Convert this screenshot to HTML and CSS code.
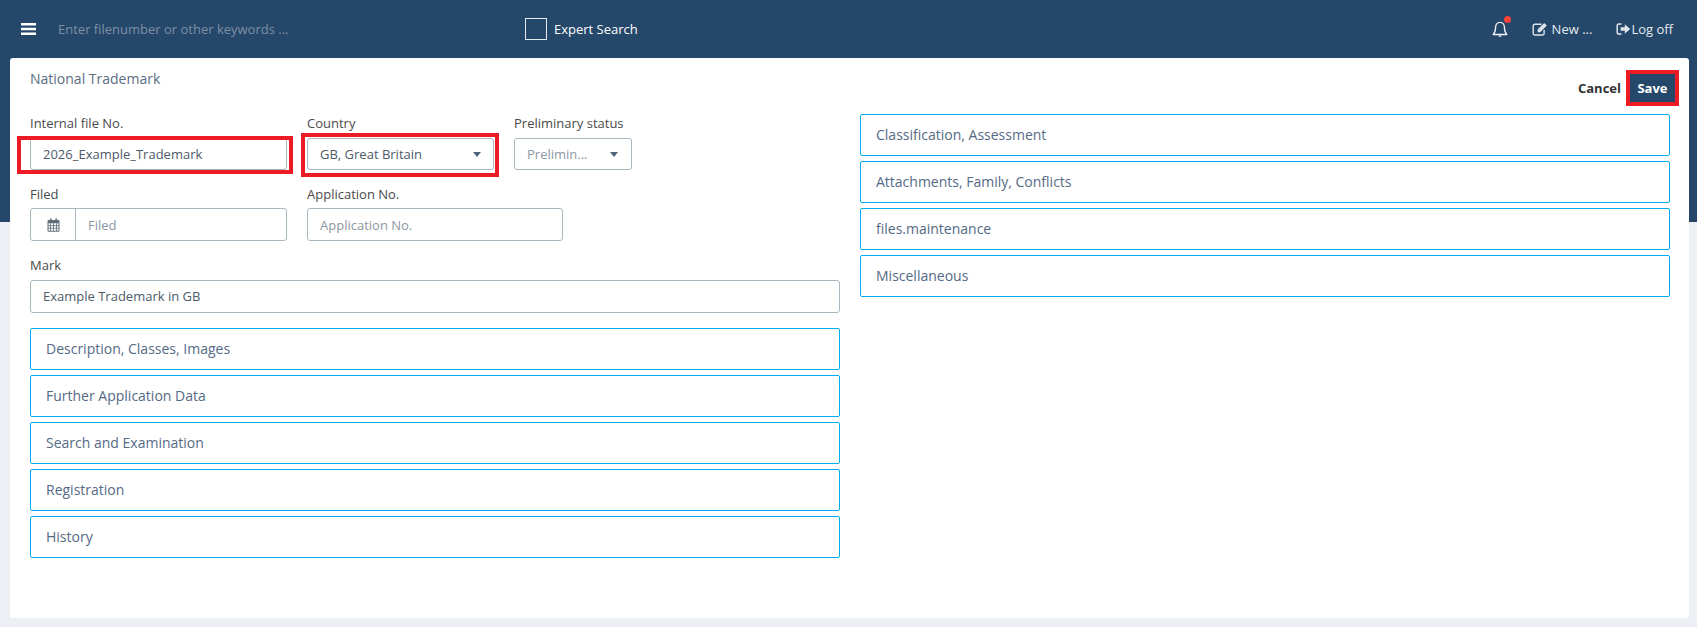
FILE: index.html
```html
<!DOCTYPE html>
<html lang="en">
<head>
<meta charset="utf-8">
<title>National Trademark</title>
<link rel="stylesheet" href="styles.css">
</head>
<body>
<div class="page">
  <header class="topbar">
    <svg class="burger" viewBox="0 0 15 12" width="15" height="12"><path d="M0 0h15v2.6H0zM0 4.7h15v2.6H0zM0 9.4h15V12H0z" fill="#fff"/></svg>
    <span class="search">Enter filenumber or other keywords ...</span>
    <span class="checkbox"></span>
    <span class="expert">Expert Search</span>
    <div class="nav">
      <span class="bell">
        <svg viewBox="0 0 16 17" width="16" height="17"><path d="M8 1.4c-2.9 0-4.4 2.2-4.4 4.9 0 3.6-.9 5.7-2.4 7.2h13.6c-1.5-1.5-2.4-3.6-2.4-7.2 0-2.7-1.5-4.9-4.4-4.9z" fill="none" stroke="#f0f3f6" stroke-width="1.3" stroke-linejoin="round"/><path d="M6.2 14.6a1.9 1.9 0 0 0 3.6 0z" fill="#f0f3f6"/></svg>
        <i class="dot"></i>
      </span>
      <span class="nav-item new">
        <svg viewBox="0 0 16 14" width="16" height="14"><path d="M9.5 2.2H3A1.7 1.7 0 0 0 1.2 4v7.2A1.7 1.7 0 0 0 3 13h7.4a1.7 1.7 0 0 0 1.7-1.8V8" fill="none" stroke="#dfe5ea" stroke-width="1.4"/><path d="M5.6 7.6l6.6-6.6 2.6 2.6-6.6 6.6H5.6z" fill="#dfe5ea"/></svg>
        New ...
      </span>
      <span class="nav-item">
        <svg viewBox="0 0 15 14" width="15" height="14"><path d="M5.5 2H3A1.8 1.8 0 0 0 1.2 3.8v6.4A1.8 1.8 0 0 0 3 12h2.5" fill="none" stroke="#dfe5ea" stroke-width="1.5"/><path d="M4.6 5.2h4.2V2.2L14.2 7 8.8 11.8V8.8H4.6z" fill="#dfe5ea"/></svg>Log off
      </span>
    </div>
  </header>

  <main class="card">
    <div class="card-head">
      <h1 class="title">National Trademark</h1>
      <div class="actions">
        <span class="cancel">Cancel</span>
        <span class="save">Save<i class="mark mark-save"></i></span>
      </div>
    </div>
    <div class="columns">
      <section class="col">
        <div class="row row-top">
          <div class="field w-file">
            <label>Internal file No.</label>
            <div class="control value">2026_Example_Trademark</div>
            <i class="mark mark-file"></i>
          </div>
          <div class="field w-country">
            <label>Country</label>
            <div class="control select value"><span>GB, Great Britain</span><i class="caret"></i></div>
            <i class="mark mark-country"></i>
          </div>
          <div class="field w-status">
            <label>Preliminary status</label>
            <div class="control select muted"><span>Prelimin...</span><i class="caret"></i></div>
          </div>
        </div>
        <div class="row row-mid">
          <div class="field w-file">
            <label>Filed</label>
            <div class="control group muted">
              <span class="addon">
                <svg viewBox="0 0 13 14" width="13" height="14"><path d="M1 2.6h11v10.6H1z" fill="none" stroke="#5f6c78" stroke-width="1"/><path d="M1 2.6h11v2.6H1zM3 .6h1.6v2.8H3zM8.4.6H10v2.8H8.4z" fill="#5f6c78"/><path d="M3.5 5.2v8M6.5 5.2v8M9.5 5.2v8M1 7.6h11M1 10.2h11" stroke="#5f6c78" stroke-width=".8"/></svg>
              </span>
              <span class="group-text">Filed</span>
            </div>
          </div>
          <div class="field w-app">
            <label>Application No.</label>
            <div class="control muted">Application No.</div>
          </div>
        </div>
        <div class="row row-mark">
          <div class="field w-full">
            <label>Mark</label>
            <div class="control value">Example Trademark in GB</div>
          </div>
        </div>
        <div class="panels">
          <div class="panel">Description, Classes, Images</div>
          <div class="panel">Further Application Data</div>
          <div class="panel">Search and Examination</div>
          <div class="panel">Registration</div>
          <div class="panel">History</div>
        </div>
      </section>
      <section class="col">
        <div class="panels">
          <div class="panel">Classification, Assessment</div>
          <div class="panel">Attachments, Family, Conflicts</div>
          <div class="panel">files.maintenance</div>
          <div class="panel">Miscellaneous</div>
        </div>
      </section>
    </div>
  </main>
</div>
</body>
</html>
```

FILE: styles.css
```css
* { box-sizing: border-box; }
html, body { margin: 0; height: 100%; }
body {
  font-family: "Open Sans", "Liberation Sans", sans-serif;
  font-size: 13px;
  color: #4d627b;
  overflow: hidden;
}
.page {
  width: 1697px;
  height: 627px;
  padding-bottom: 9px;
  display: flex;
  flex-direction: column;
  background: linear-gradient(#25476a 222px, #ecf0f5 222px);
}
.topbar {
  height: 58px;
  flex: none;
  display: flex;
  align-items: center;
  padding: 0 24px 0 21px;
  color: #fff;
}
.burger { flex: none; }
.search { margin-left: 22px; width: 467px; color: #7c8fa5; }
.checkbox { width: 22px; height: 22px; border: 1px solid #e6ebf0; flex: none; }
.expert { margin-left: 7px; }
.nav { margin-left: auto; display: flex; align-items: center; color: #e4e9ee; }
.nav-item { display: flex; align-items: center; }
.nav-item svg { margin-right: 4px; }
.new { margin-right: 24px; }
.nav-item + .nav-item svg { margin-right: 0; }
.bell { position: relative; display: flex; margin-right: 24px; }
.dot {
  position: absolute;
  top: -5px;
  right: -3px;
  width: 7px;
  height: 7px;
  border-radius: 50%;
  background: #f44336;
}
.card {
  width: 1679px;
  margin-left: 10px;
  flex: 1;
  background: #fff;
  border-radius: 3px;
  padding: 0 19px 0 20px;
}
.card-head {
  display: flex;
  justify-content: space-between;
  height: 44px;
}
.title { margin: 11px 0 0; font-size: 14px; font-weight: 400; line-height: 20px; color: #5b6d82; }
.actions { display: flex; align-items: center; margin: 16px -5px 0 0; height: 28px; }
.cancel { font-weight: 700; color: #333; margin-right: 9px; }
.save {
  position: relative;
  width: 45px;
  height: 28px;
  line-height: 28px;
  text-align: center;
  font-weight: 700;
  color: #fff;
  background: #25476a;
}
.columns { display: grid; grid-template-columns: 810px 810px; gap: 20px; margin-top: 12px; }
.row { display: flex; gap: 20px; }
.row-top { height: 70px; margin-top: 1px; }
.row-mid { height: 72px; }
.row-mark { height: 71px; }
.field { position: relative; }
.field label { display: block; height: 24px; line-height: 18px; margin-top: -1px; color: #4a4a4a; }
.row-mid .field label { height: 23px; margin-top: 0; }
.w-file { width: 257px; }
.w-country { width: 187px; }
.w-status { width: 118px; }
.w-app { width: 256px; }
.w-full { width: 810px; }
.control {
  height: 33px;
  line-height: 31px;
  border: 1px solid #a9b7bf;
  border-radius: 3px;
  padding: 0 12px;
  background: #fff;
}
.row-mid .control { line-height: 33px; }
.row-top .control { height: 32px; line-height: 30px; }
.value { color: #4d5a69; }
.muted { color: #8c98a5; }
.select { display: flex; align-items: center; justify-content: space-between; }
.w-status .select { padding-right: 13px; }
.caret {
  width: 0;
  height: 0;
  border-left: 4.5px solid transparent;
  border-right: 4.5px solid transparent;
  border-top: 5px solid #4d627b;
}
.group { display: flex; padding: 0; }
.addon {
  width: 45px;
  flex: none;
  display: flex;
  align-items: center;
  justify-content: center;
  border-right: 1px solid #a9b7bf;
}
.group-text { padding-left: 12px; }
.panels { display: flex; flex-direction: column; gap: 5px; }
.panel {
  height: 42px;
  line-height: 40px;
  padding: 0 15px;
  font-size: 14px;
  color: #556a85;
  border: 1px solid #00aef0;
  border-radius: 2px;
  background: #fff;
}
.mark { position: absolute; border: 4px solid #ed1c24; pointer-events: none; }
.mark-save { top: -4px; left: -4px; right: -4px; bottom: -4px; }
.mark-file { top: 21px; left: -13px; width: 276px; height: 38px; }
.mark-country { top: 18px; left: -6px; width: 198px; height: 44px; }
```
